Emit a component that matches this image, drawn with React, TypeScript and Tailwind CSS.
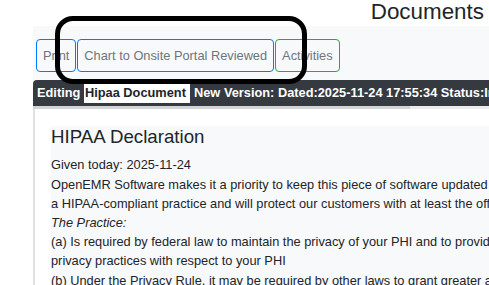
export default function App() {
  return (
    <div className="relative w-[489px] h-[285px] overflow-hidden bg-white font-['Liberation_Sans',Arial,sans-serif] text-[#212529]">
      {/* Header */}
      <div className="h-[26px] flex justify-end pr-[5px]">
        <h2 className="text-[22.4px] leading-[24px] font-normal">Documents</h2>
      </div>

      <div className="ml-[33px] bg-[#f8f9fa]">
        {/* Toolbar */}
        <div className="flex gap-px pl-[3px] pt-[13px] pb-[8px] text-[12.8px] text-[#6c757d]">
          <button className="h-[33px] px-[6px] border border-[#007bff] rounded-[4px] whitespace-nowrap">Print</button>
          <button className="h-[33px] px-[6px] border border-[#007bff] rounded-[4px] whitespace-nowrap">
            Chart to Onsite Portal Reviewed
          </button>
          <button className="h-[33px] px-[6px] border border-[#28a745] rounded-[4px] whitespace-nowrap">Activities</button>
        </div>

        {/* Editing bar */}
        <div className="h-[26px] flex items-center pl-[4px] bg-[#343a40] rounded-tl-[4px] overflow-hidden whitespace-nowrap text-white font-bold text-[12.8px]">
          Editing&nbsp;
          <span className="bg-white text-[#212529] px-[1px]">Hipaa Document&nbsp;</span>
          &nbsp;New Version: Dated:2025-11-24 17:55:34 Status:In Review
        </div>
        <div className="h-[3px] flex">
          <div className="w-[377px] bg-[#d2d3d5]" />
          <div className="flex-1 bg-[#ebebec]" />
        </div>

        {/* Document */}
        <div className="border-l-[2px] border-[#dee2e6] bg-white pt-[17px] pl-[16px] h-[200px]">
          <div className="bg-[#f8f9fa] whitespace-nowrap text-[12.8px] leading-[19.2px]">
            <h3 className="text-[18.72px] leading-[22.4px] mb-[7px]">HIPAA Declaration</h3>
            <div>Given today: 2025-11-24</div>
            <div>OpenEMR Software makes it a priority to keep this piece of software updated with the most recent available security options so it will integrate easily into</div>
            <div>a HIPAA-compliant practice and will protect our customers with at least the official HIPAA regulations.</div>
            <div className="italic">The Practice:</div>
            <div>(a) Is required by federal law to maintain the privacy of your PHI and to provide you with this notice of our legal duties and</div>
            <div>privacy practices with respect to your PHI</div>
            <div>(b) Under the Privacy Rule, it may be required by other laws to grant greater access or maintain greater restrictions</div>
          </div>
        </div>
      </div>

      {/* Annotation outline */}
      <div className="absolute left-[55px] top-[16px] w-[252px] h-[68px] border-[5px] border-black rounded-[18px] pointer-events-none" />
    </div>
  );
}
